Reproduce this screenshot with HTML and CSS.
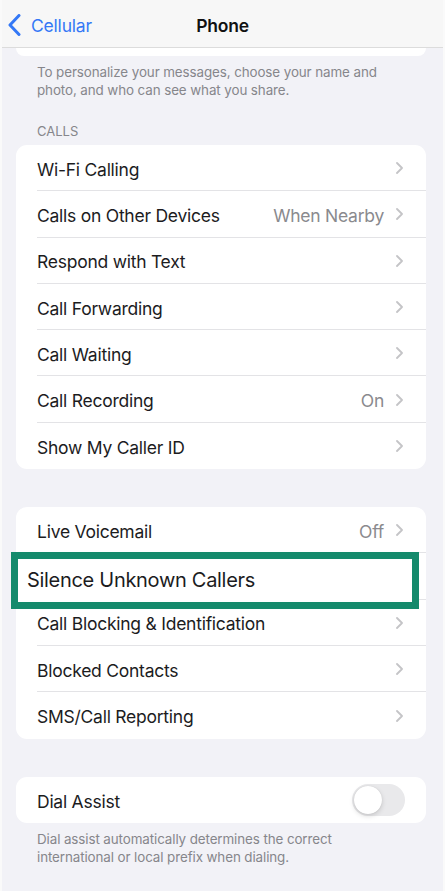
FILE: index.html
```html
<!DOCTYPE html>
<html lang="en">
<head>
    <meta charset="utf-8" />
    <meta name="viewport" content="width=device-width, initial-scale=1" />
    <title>Phone</title>
    <link rel="stylesheet" href="styles.css">
</head>
<body>
    <header class="navbar">
        <a class="back" href="#">
            <svg class="back-chevron" width="13" height="22" viewBox="0 0 13 22">
                <polyline points="11,1.5 2,11 11,20.5" fill="none" stroke="#3478f6" stroke-width="3" stroke-linecap="round" stroke-linejoin="round" />
            </svg>
            <span>Cellular</span>
        </a>
        <h1>Phone</h1>
        <span></span>
    </header>

    <div class="card-tail"></div>

    <p class="note">To personalize your messages, choose your name and photo, and who can see what you share.</p>

    <h2 class="section-title">CALLS</h2>
    <ul class="card">
        <li class="row"><span class="label">Wi-Fi Calling</span><span class="chevron"></span></li>
        <li class="row"><span class="label">Calls on Other Devices</span><span class="value">When Nearby</span><span class="chevron"></span></li>
        <li class="row"><span class="label">Respond with Text</span><span class="chevron"></span></li>
        <li class="row"><span class="label">Call Forwarding</span><span class="chevron"></span></li>
        <li class="row"><span class="label">Call Waiting</span><span class="chevron"></span></li>
        <li class="row"><span class="label">Call Recording</span><span class="value">On</span><span class="chevron"></span></li>
        <li class="row"><span class="label">Show My Caller ID</span><span class="chevron"></span></li>
    </ul>

    <ul class="card">
        <li class="row"><span class="label">Live Voicemail</span><span class="value">Off</span><span class="chevron"></span></li>
        <li class="row marked">
            <div class="highlight">Silence Unknown Callers</div>
        </li>
        <li class="row"><span class="label">Call Blocking &amp; Identification</span><span class="chevron"></span></li>
        <li class="row"><span class="label">Blocked Contacts</span><span class="chevron"></span></li>
        <li class="row"><span class="label">SMS/Call Reporting</span><span class="chevron"></span></li>
    </ul>

    <ul class="card">
        <li class="row"><span class="label">Dial Assist</span><span class="switch"><span class="knob"></span></span></li>
    </ul>
    <p class="note note-bottom">Dial assist automatically determines the correct international or local prefix when dialing.</p>
</body>
</html>
```

FILE: styles.css
```css
* {
    margin: 0;
    padding: 0;
    box-sizing: border-box;
}

body {
    font-family: Inter, "Noto Sans", "Liberation Sans", sans-serif;
    background: #f2f2f7;
    color: #1c1c1e;
    border-left: 2px solid #fafafa;
    border-right: 2px solid #fafafa;
    min-height: 100vh;
}

/* top navigation */
.navbar {
    display: grid;
    grid-template-columns: 1fr auto 1fr;
    align-items: center;
    height: 48px;
    background: #f7f7f7;
    border-bottom: 1px solid #dcdcdc;
    padding: 3px 6px 0 6px;
}

.back {
    display: flex;
    align-items: center;
    gap: 10px;
    color: #3478f6;
    text-decoration: none;
    font-size: 17.5px;
    letter-spacing: -0.2px;
}

.navbar h1 {
    font-size: 17.5px;
    font-weight: 600;
    color: #111;
    letter-spacing: -0.2px;
}

/* bottom of the card scrolled under the bar */
.card-tail {
    height: 8px;
    margin: 0 17px 0 14px;
    background: #fff;
    border-radius: 0 0 10px 10px;
}

.note {
    margin: 7px 17px 0 14px;
    padding: 0 21px;
    font-size: 13.4px;
    line-height: 18px;
    color: #86868b;
    letter-spacing: -0.1px;
}

.section-title {
    margin: 23px 17px 5px 14px;
    padding: 0 21px;
    font-size: 13px;
    font-weight: 400;
    line-height: 18px;
    color: #86868b;
}

.card {
    list-style: none;
    margin: 0 17px 38px 14px;
    background: #fff;
    border-radius: 11px;
    overflow: hidden;
}

.row {
    display: flex;
    align-items: center;
    height: 46.3px;
    margin-left: 21px;
    padding: 3px 23px 0 0;
    border-bottom: 1px solid #e3e3e6;
    font-size: 17.5px;
    letter-spacing: -0.25px;
}

.row:last-child {
    border-bottom: none;
}

.label {
    flex: 1;
}

.value {
    color: #8a8a8e;
    margin-right: 12px;
}

.chevron {
    width: 7px;
    height: 12px;
    margin-top: -2px;
    background: url("data:image/svg+xml,%3Csvg xmlns='http://www.w3.org/2000/svg' width='7' height='12' viewBox='0 0 7 12'%3E%3Cpolyline points='1,1 6,6 1,11' fill='none' stroke='%23c4c4c7' stroke-width='1.8' stroke-linecap='round' stroke-linejoin='round'/%3E%3C/svg%3E") no-repeat center;
}

/* outlined callout over one row */
.row.marked {
    position: relative;
}

.card:has(.marked) {
    overflow: visible;
}

.highlight {
    position: absolute;
    left: -26px;
    right: 7px;
    top: -1px;
    bottom: -10px;
    display: flex;
    align-items: center;
    padding: 0 0 2px 9px;
    background: #fff;
    border: 7px solid #148a6c;
    font-size: 20px;
    letter-spacing: -0.3px;
    color: #1c1c1e;
}

.switch {
    position: relative;
    width: 53px;
    height: 32px;
    margin: -3px -2px 0 0;
    border-radius: 16px;
    background: #e9e9eb;
}

.knob {
    position: absolute;
    left: 2px;
    top: 2px;
    width: 28px;
    height: 28px;
    border-radius: 50%;
    background: #fff;
    box-shadow: 0 2px 5px rgba(0, 0, 0, 0.15), 0 0 1px rgba(0, 0, 0, 0.15);
}

.note-bottom {
    margin-top: -31px;
}
```
